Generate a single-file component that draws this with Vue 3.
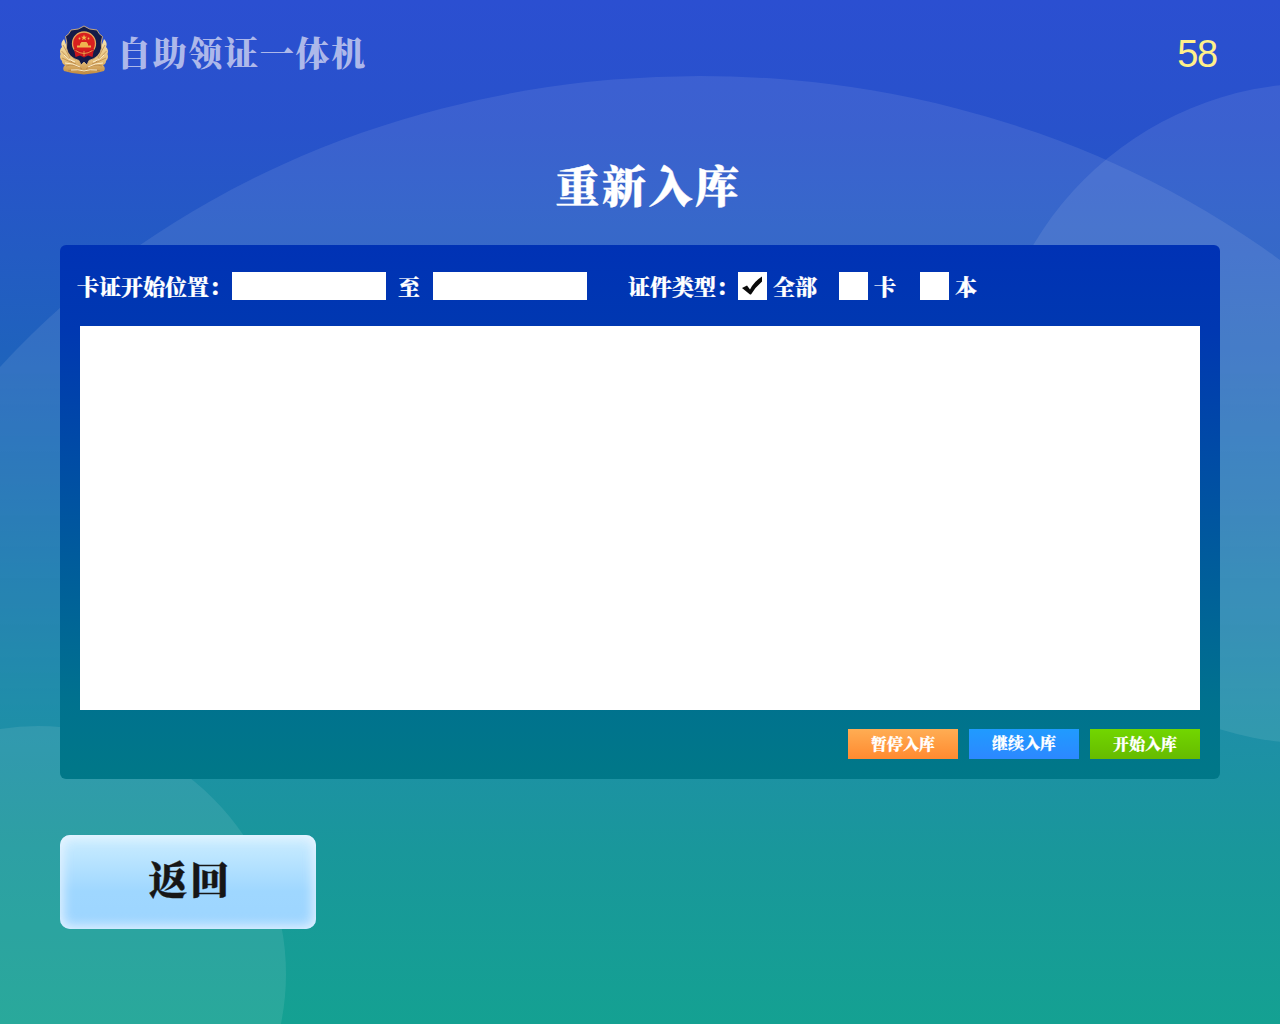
<script setup>
import { ref } from 'vue'

const seconds = ref(58)
const start = ref('')
const end = ref('')
const types = ref([
  { label: '全部', checked: true },
  { label: '卡', checked: false },
  { label: '本', checked: false },
])
const actions = [
  { label: '暂停入库', kind: 'pause' },
  { label: '继续入库', kind: 'resume' },
  { label: '开始入库', kind: 'start' },
]
</script>

<template>
  <div class="screen">
    <svg class="backdrop" viewBox="0 0 1280 1024" aria-hidden="true">
      <g fill="#fff" fill-opacity="0.09">
        <ellipse cx="699.5" cy="823" rx="883" ry="747" mask="url(#fade)" />
        <circle cx="1317.5" cy="413.5" r="330.5" />
        <circle cx="38" cy="974" r="248" />
      </g>
      <defs>
        <linearGradient id="fadeFill" x1="0" y1="76" x2="0" y2="800" gradientUnits="userSpaceOnUse">
          <stop offset="0" stop-color="#fff" />
          <stop offset="0.4" stop-color="#fff" />
          <stop offset="0.9" stop-color="#000" />
        </linearGradient>
        <mask id="fade" maskUnits="userSpaceOnUse" x="0" y="0" width="1280" height="1024">
          <rect width="1280" height="1024" fill="url(#fadeFill)" />
        </mask>
      </defs>
    </svg>

    <header class="top">
      <svg class="emblem" viewBox="0 0 50 50" aria-hidden="true">
        <defs>
          <linearGradient id="gold" x1="0" y1="0" x2="0" y2="1">
            <stop offset="0" stop-color="#f7e2ae" />
            <stop offset="0.6" stop-color="#e6c07a" />
            <stop offset="1" stop-color="#c08a40" />
          </linearGradient>
        </defs>
        <path d="M5 14Q1 18 3 22Q0 25 1.500 29Q0 33 3 36Q3 39 6 40Q3 43 5 46Q14 49 25 49.500Q36 49 45 46Q47 43 44 40Q47 39 47 36Q50 33 48.500 29Q50 25 47 22Q49 18 45 14L40 28L25 38L10 28Z" fill="url(#gold)" />
        <path d="M4 20Q8 27 11 33M2.500 26Q7 31 13 37M3 33Q9 36 17 39M46 20Q42 27 39 33M47.500 26Q43 31 37 37M47 33Q41 36 33 39M7 41Q15 38 23 44M43 41Q35 38 27 44M9 46Q18 43 25 47Q32 43 41 46" fill="none" stroke="#a9743a" stroke-width=".6" />
        <path d="M5 30Q9 35 16 37M45 30Q41 35 34 37M6 38Q14 38 21 42M44 38Q36 38 29 42M12 45Q19 44 25 46Q31 44 38 45" fill="none" stroke="#fff3d2" stroke-width=".9" />
        <path d="M25 1Q30 5 38 5Q39.500 9 43.500 11.500Q41.500 17 42.500 23Q41 32.500 30 35.500L28 40L25 37L22 40L20 35.500Q9 32.500 7.500 23Q8.500 17 6.500 11.500Q10.500 9 12 5Q20 5 25 1Z" fill="#141b48" stroke="#d5b077" stroke-width=".9" />
        <circle cx="25" cy="18.500" r="11.500" fill="#d8201f" stroke="#e3a95c" stroke-width="1.300" />
        <path d="M25 9.500L25.800 11.700H28L26.200 13.100L27 15.300L25 14L23 15.300L23.800 13.100L22 11.700H24.200Z" fill="#f2b84b" />
        <circle cx="20.500" cy="13.500" r=".9" fill="#f2b84b" />
        <circle cx="29.500" cy="13.500" r=".9" fill="#f2b84b" />
        <path d="M21 19L22.500 17H27.500L29 19V20.500H32V22.500H18V20.500H21Z" fill="#efb64f" />
        <path d="M15 23.500Q20 26 25 26Q30 26 35 23.500L33.500 32L29 30.500L25 32.500L21 30.500L16.500 32Z" fill="#c9151e" />
        <path d="M16.500 25.500Q21 28.500 25 28.500Q29 28.500 33.500 25.500M25 26V31" fill="none" stroke="#e9a84c" stroke-width=".9" />
      </svg>
      <span class="brand">自助领证一体机</span>
      <span class="countdown">{{ seconds }}</span>
    </header>

    <h1 class="title">重新入库</h1>

    <main class="panel">
      <div class="filters">
        <span class="label position">卡证开始位置：</span>
        <input v-model="start" class="field" type="text" />
        <span class="label to">至</span>
        <input v-model="end" class="field" type="text" />
        <span class="label kind">证件类型：</span>
        <label v-for="t in types" :key="t.label" class="option">
          <span class="box" @click="t.checked = !t.checked">
            <svg v-if="t.checked" viewBox="0 0 29 28">
              <path d="M4 16L9 13.500L12 17.500Q16 9.500 24 4.500V9.500Q17.500 15 13 22.500H12Z" fill="#0a0a0a" />
            </svg>
          </span>
          <span class="label">{{ t.label }}</span>
        </label>
      </div>
      <div class="list"></div>
      <div class="actions">
        <button v-for="a in actions" :key="a.kind" :class="['action', a.kind]">{{ a.label }}</button>
      </div>
    </main>

    <button class="back">返回</button>
  </div>
</template>

<style>
body {
  margin: 0;
}
</style>

<style scoped>
.screen {
  position: relative;
  box-sizing: border-box;
  width: 1280px;
  height: 1024px;
  padding: 0 60px;
  overflow: hidden;
  display: flex;
  flex-direction: column;
  align-items: flex-start;
  background: linear-gradient(180deg, #2b4fd1 0, #2852cb 130px, #1f62bd 350px, #1f8daa 700px, #19979b 850px, #14a192 1024px);
  font-family: "Noto Serif CJK SC", "Source Han Serif SC", "Noto Sans CJK SC", serif;
  font-weight: 900;
  color: #fff;
}
.backdrop {
  position: absolute;
  inset: 0;
  width: 1280px;
  height: 1024px;
}
.top,
.title,
.panel,
.back {
  position: relative;
}
.top {
  display: flex;
  align-items: center;
  width: 100%;
  height: 100px;
}
.emblem {
  width: 50px;
  height: 50px;
  margin-left: -1px;
}
.brand {
  margin-left: 8px;
  margin-top: 4px;
  font-size: 34px;
  line-height: 50px;
  letter-spacing: 1.7px;
  color: #adb8ea;
}
.countdown {
  margin: 7px 3px 0 auto;
  font: 400 38px/50px "Liberation Sans", Arial, sans-serif;
  letter-spacing: -1.2px;
  color: #fff08a;
}
.title {
  align-self: center;
  margin: 53px 0 0 17px;
  height: 92px;
  font-size: 44px;
  line-height: 62px;
  letter-spacing: 2.5px;
  font-weight: 900;
  -webkit-text-stroke: 0.4px #fff;
}
.panel {
  box-sizing: border-box;
  width: 1160px;
  height: 534px;
  padding: 27px 20px 0;
  border-radius: 6px;
  background: linear-gradient(180deg, #0032b5 0, #0038b1 85px, #00728e 460px, #007888 100%);
}
.filters {
  display: flex;
  height: 28px;
}
.label {
  font-size: 22px;
  line-height: 28px;
  white-space: nowrap;
  -webkit-text-stroke: 0.2px #fff;
}
.position {
  width: 155px;
  margin-left: -3px;
}
.field {
  box-sizing: border-box;
  width: 154px;
  height: 28px;
  padding: 0 6px;
  border: 0;
  border-radius: 0;
  background: #fff;
  font-size: 20px;
}
.to {
  width: 35px;
  margin-left: 12px;
}
.kind {
  width: 110px;
  margin-left: 41px;
}
.option {
  display: flex;
  gap: 6px;
}
.option + .option {
  margin-left: 22px;
}
.option:last-child {
  margin-left: 24px;
}
.box {
  width: 29px;
  height: 28px;
  background: #fff;
}
.box svg {
  display: block;
  width: 29px;
  height: 28px;
}
.list {
  height: 384px;
  margin-top: 26px;
  background: #fff;
}
.actions {
  display: flex;
  justify-content: flex-end;
  gap: 11px;
  margin-top: 19px;
}
.action {
  width: 110px;
  height: 30px;
  padding: 0;
  border: 0;
  font: 900 16px/30px "Noto Serif CJK SC", "Source Han Serif SC", "Noto Sans CJK SC", serif;
  color: #fff;
  -webkit-text-stroke: 0.2px #fff;
}
.pause {
  background: linear-gradient(#ffad53, #ff8a30);
}
.resume {
  padding-bottom: 2px;
  line-height: 28px;
  background: linear-gradient(#209bff, #2c88ff);
}
.start {
  background: linear-gradient(#72d600, #66bb00);
}
.back {
  width: 256px;
  height: 94px;
  margin-top: 56px;
  padding: 0 0 10px 4px;
  border: 0;
  border-radius: 10px;
  background: linear-gradient(#cdeeff 0, #9fd7ff 60%, #9dd5ff 100%);
  box-shadow: inset 0 0 12px 3px rgba(235, 245, 255, 0.9);
  font: 900 39px/56px "Noto Serif CJK SC", "Source Han Serif SC", "Noto Sans CJK SC", serif;
  letter-spacing: 2.5px;
  color: #161616;
  -webkit-text-stroke: 0.4px #161616;
}
</style>
